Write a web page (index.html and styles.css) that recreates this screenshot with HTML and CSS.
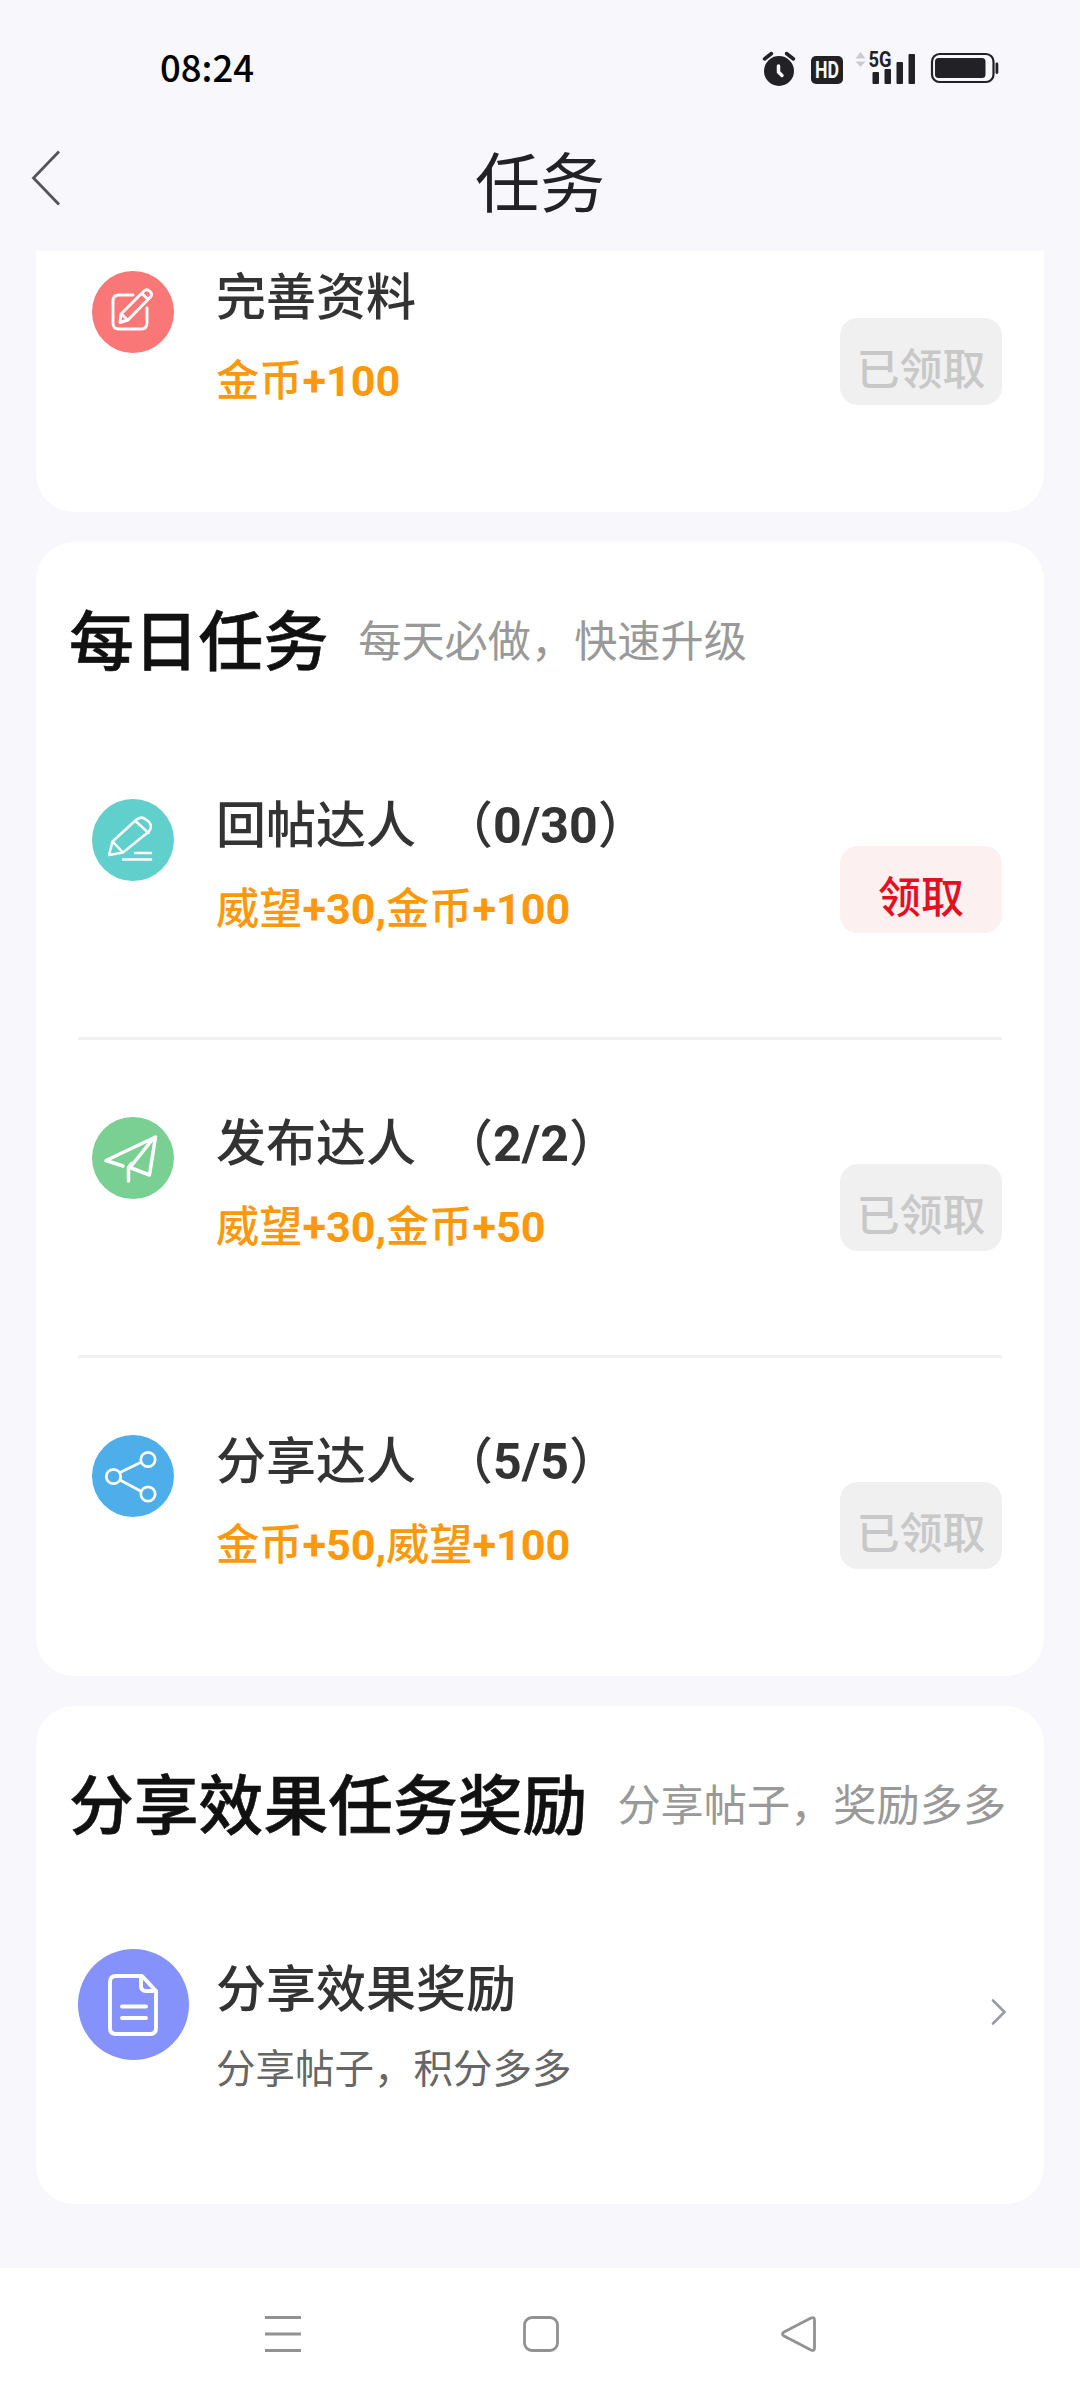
FILE: index.html
```html
<!DOCTYPE html>
<html lang="zh-CN">
<head>
<meta charset="utf-8">
<title>任务</title>
<link rel="stylesheet" href="styles.css">
</head>
<body>
<header class="top">
  <div class="status">
    <span class="clock">08:24</span>
    <svg class="status-icons" width="240" height="40" viewBox="760 48 240 40">
      <circle cx="779" cy="71" r="15" fill="#222226"/>
      <path d="M764.500 59l7-5.500M793.500 59l-7-5.500" stroke="#222226" stroke-width="3.500" stroke-linecap="round"/>
      <path d="M778.500 66v6l3.500 3.500" fill="none" stroke="#f7f7fc" stroke-width="3.500" stroke-linecap="round"/>
      <rect x="811" y="56" width="32" height="28" rx="5" fill="#222226"/>
      <text class="hd" x="827" y="78.200" text-anchor="middle" textLength="24" lengthAdjust="spacingAndGlyphs">HD</text>
      <path d="M855.500 58.500l5-6.500 5 6.500zM855.500 61.500l5 5.500 5-5.500z" fill="#cbcbd0"/>
      <text class="net" x="868.500" y="67" textLength="23" lengthAdjust="spacingAndGlyphs">5G</text>
      <g fill="#222226">
        <rect x="872.500" y="72" width="6.500" height="12" rx="1"/>
        <rect x="884.500" y="69" width="6.500" height="15" rx="1"/>
        <rect x="896.500" y="62" width="6.500" height="22" rx="1"/>
        <rect x="908.500" y="54" width="6.500" height="30" rx="1"/>
        <rect x="935" y="58" width="50.500" height="20" rx="3.500"/>
        <rect x="995.500" y="62.500" width="2.800" height="11.500" rx="1.400"/>
      </g>
      <rect x="932" y="54" width="61.500" height="28" rx="7.500" fill="none" stroke="#222226" stroke-width="2.200"/>
    </svg>
  </div>
  <div class="nav">
    <svg class="back" width="30" height="56" viewBox="0 0 30 56"><path d="M28 1.500L2.500 28 28 54.500" fill="none" stroke="#555559" stroke-width="2.800"/></svg>
    <h1 class="nav-title">任务</h1>
  </div>
</header>

<main class="content">
  <section class="card card-cut">
    <div class="task">
      <svg class="icon" viewBox="0 0 82 82"><circle cx="41" cy="41" r="41" fill="#f97777"/>
        <g fill="none" stroke="#fff" stroke-width="2.900" stroke-linecap="round" stroke-linejoin="round"><path d="M41 24H27q-6 0-6 6v22q0 6 6 6h22q6 0 6-6V37"/><path d="M29 43L52 20q2.500-2.500 5.500 0l1 1q2.500 2.500 0 5L36 49l-8 2.500zM50 22.500l6 6M29.500 43l6 6"/></g></svg>
      <div class="info"><h3>完善资料</h3><p>金币<b>+100</b></p></div>
      <span class="btn">已领取</span>
    </div>
  </section>

  <section class="card">
    <div class="head"><h2>每日任务</h2><span>每天必做，快速升级</span></div>
    <div class="task">
      <svg class="icon" viewBox="0 0 82 82"><circle cx="41" cy="41" r="41" fill="#61cfcb"/>
        <g fill="none" stroke="#fff" stroke-width="2.500" stroke-linejoin="round" stroke-linecap="round"><path d="M17 56l3.500-13.500L44 21q5-4.500 10-.5c6 4 6 8 3 12L31 53.500zM20.500 42.500l10.500 11M43.500 22l13 12"/><path d="M43 54h16M31 60.500h28"/></g></svg>
      <div class="info"><h3>回帖达人<span class="count">（<b>0/30</b>）</span></h3><p>威望<b>+30,</b>金币<b>+100</b></p></div>
      <span class="btn btn-on">领取</span>
    </div>
    <div class="task">
      <svg class="icon" viewBox="0 0 82 82"><circle cx="41" cy="41" r="41" fill="#7acf92"/>
        <path d="M31 49L14 43.500 63.500 20 57.500 58 38 50.500 60 23M36.500 64V50.500l3-4" fill="none" stroke="#fff" stroke-width="3.500" stroke-linejoin="round" stroke-linecap="round"/></svg>
      <div class="info"><h3>发布达人<span class="count">（<b>2/2</b>）</span></h3><p>威望<b>+30,</b>金币<b>+50</b></p></div>
      <span class="btn">已领取</span>
    </div>
    <div class="task">
      <svg class="icon" viewBox="0 0 82 82"><circle cx="41" cy="41" r="41" fill="#4daeea"/>
        <g fill="none" stroke="#fff" stroke-width="2.700"><circle cx="21.500" cy="41.500" r="7.200"/><circle cx="56" cy="24.500" r="7.200"/><circle cx="56" cy="59" r="7.200"/><path d="M28 37.500L49.500 27M28 45L49.500 56.500"/></g></svg>
      <div class="info"><h3>分享达人<span class="count">（<b>5/5</b>）</span></h3><p>金币<b>+50,</b>威望<b>+100</b></p></div>
      <span class="btn">已领取</span>
    </div>
  </section>

  <section class="card card-share">
    <div class="head"><h2>分享效果任务奖励</h2><span>分享帖子，奖励多多</span></div>
    <div class="share">
      <svg class="icon-big" viewBox="0 0 111 111"><circle cx="55.500" cy="55.500" r="55.500" fill="#8592fb"/>
        <g fill="none" stroke="#fff" stroke-width="3.900" stroke-linejoin="round" stroke-linecap="round"><path d="M38 27h26L78 42v37q0 6-6 6H38q-6 0-6-6V33q0-6 6-6z"/><path d="M63 28v9q0 5 5 5h9M44 57.500h24M44 69h24"/></g></svg>
      <div class="share-text"><h3>分享效果奖励</h3><p>分享帖子，积分多多</p></div>
      <svg class="arrow" width="18" height="28" viewBox="0 0 18 28"><path d="M3 2.500L14.500 14 3 25.500" fill="none" stroke="#999ca6" stroke-width="2.600" stroke-linecap="round"/></svg>
    </div>
  </section>
</main>

<footer class="sysbar">
  <svg width="38" height="38" viewBox="0 0 38 38"><path d="M1 2.500h36M1 19h36M1 35.500h36" stroke="#929292" stroke-width="3.200"/></svg>
  <svg width="38" height="38" viewBox="0 0 38 38"><rect x="2.500" y="2.500" width="33" height="33" rx="7.500" fill="none" stroke="#929292" stroke-width="2.800"/></svg>
  <svg width="38" height="38" viewBox="0 0 38 38"><path d="M34.500 5v28q0 3.500-3.500 2L4 21q-3-2 0-4L31 3q3.500-1.500 3.500 2z" fill="none" stroke="#929292" stroke-width="2.800" stroke-linejoin="round"/></svg>
</footer>
</body>
</html>
```
FILE: styles.css
```css
* { box-sizing: border-box; margin: 0; padding: 0; }
html, body { width: 1080px; height: 2400px; overflow: hidden; }
body {
  display: flex;
  flex-direction: column;
  background: #f7f7fc;
  color: #333;
  font-family: Roboto, "Noto Sans CJK SC", sans-serif;
}
h1, h2, h3 { font-weight: 500; white-space: nowrap; }
b { font-weight: 700; }
svg { flex: none; display: block; }

.top { height: 251px; flex: none; }
.status {
  height: 110px;
  padding: 48px 80px 0 160px;
  display: flex;
  justify-content: space-between;
  align-items: flex-start;
}
.clock {
  font: 500 36.5px/40px "Noto Sans CJK SC", sans-serif;
  margin: -1px 0 0 0;
  color: #000;
}
.hd { font: 700 23px "Roboto", sans-serif; fill: #f7f7fc; }
.net { font: 700 21.5px "Roboto", sans-serif; fill: #222226; }
.nav {
  height: 140px;
  padding: 0 31px;
  display: grid;
  grid-template-columns: 30px 1fr 30px;
  align-items: start;
}
.back { margin-top: 40px; }
.nav-title {
  margin-top: 35px;
  text-align: center;
  font-size: 65px;
  line-height: 80px;
  font-weight: 400;
  color: #222226;
}

.content {
  height: 2017px;
  flex: none;
  padding: 0 36px;
  display: flex;
  flex-direction: column;
  gap: 30px;
}
.card {
  flex: none;
  background: #fff;
  border-radius: 38px;
  padding: 0 42px;
}
.card-cut {
  height: 261px;
  border-radius: 0 0 38px 38px;
  overflow: hidden;
  display: flex;
  flex-direction: column;
  justify-content: flex-end;
}
.card-share { height: 498px; }

.head {
  height: 180px;
  padding-top: 61px;
  margin-left: -9px;
  display: flex;
  gap: 30px;
  line-height: 80px;
  white-space: nowrap;
}
.head h2 { font-size: 64.8px; font-weight: 500; color: #111; -webkit-text-stroke: 0.6px #111; }
.head span { font-size: 43.2px; color: #999; }

.task {
  height: 318px;
  flex: none;
  display: flex;
  align-items: flex-start;
  padding-left: 14px;
  border-bottom: 3px solid #f1f1f3;
}
.task:last-child { border-bottom: 0; }
.icon { width: 82px; height: 82px; margin-top: 77px; }
.info { flex: 1; padding: 74px 0 0 42px; }
.info h3, .share h3 { font-size: 50px; line-height: 60px; font-weight: 500; }
.info .count { margin-left: 27px; }
.info p {
  margin-top: 29px;
  font-size: 43.2px;
  line-height: 50px;
  font-weight: 500;
  color: #fc980d;
}
.btn {
  flex: none;
  width: 162px;
  height: 87px;
  margin-top: 124px;
  padding-top: 16px;
  border-radius: 18px;
  background: #f0f0f0;
  color: #c8c8c8;
  text-align: center;
  font-size: 43px;
  line-height: 72px;
  font-weight: 500;
}
.btn-on { background: #fdf0f1; color: #e60f22; }

.share { display: flex; align-items: flex-start; }
.icon-big { width: 111px; height: 111px; margin-top: 63px; }
.share-text { flex: 1; padding: 74px 0 0 27px; }
.share-text p { margin-top: 22px; font-size: 39.5px; line-height: 56px; color: #666; }
.arrow { margin: 112px -6px 0 0; }

.sysbar {
  height: 132px;
  flex: none;
  background: #fff;
  display: flex;
  justify-content: space-between;
  padding: 47px 262px 0 264px;
}
```
